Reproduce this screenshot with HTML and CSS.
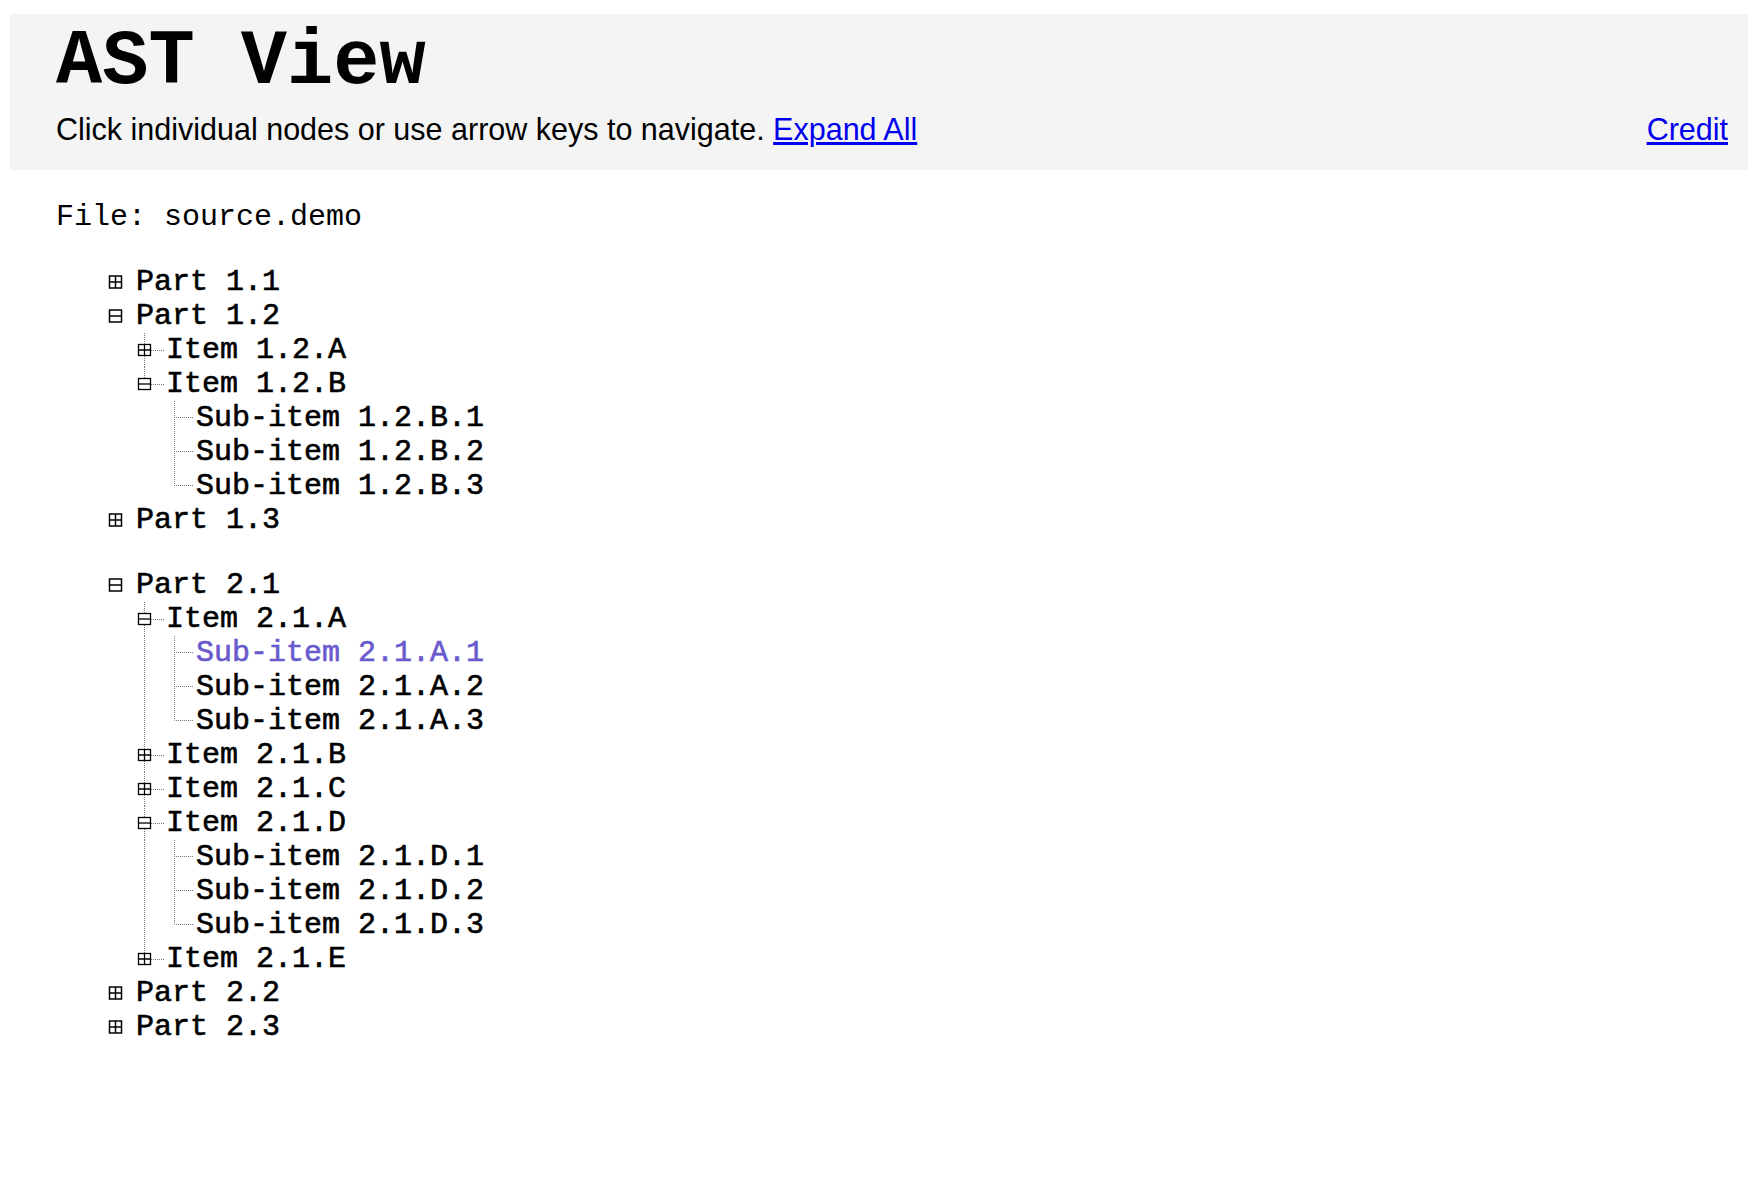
FILE: index.html
```html
<!DOCTYPE html>
<html lang="en">
<head>
<meta charset="utf-8">
<title>AST View</title>
<link rel="stylesheet" href="styles.css">
</head>
<body>
<svg class="defs" aria-hidden="true">
  <symbol id="part-plus" viewBox="0 0 30 34">
    <rect x="3.5" y="11" width="12" height="12" fill="#fff" stroke="#000" stroke-width="1.5"/>
    <path d="M3.5 17H15.5M9.5 11V23" stroke="#000" stroke-width="1.5"/>
  </symbol>
  <symbol id="part-minus" viewBox="0 0 30 34">
    <rect x="3.5" y="11" width="12" height="12" fill="#fff" stroke="#000" stroke-width="1.5"/>
    <path d="M3.5 17H15.5" stroke="#000" stroke-width="1.5"/>
  </symbol>
  <symbol id="plus-t" viewBox="0 0 30 34">
    <path d="M8.5 0V11M8.5 23V34M15 17.5H28" fill="none" stroke="#777" stroke-dasharray="1 1"/>
    <rect x="2.5" y="11.5" width="12" height="11" fill="#fff" stroke="#000" stroke-width="1.3"/>
    <path d="M2.5 17H14.5M8.5 11.5V22.5" stroke="#000" stroke-width="1.3"/>
  </symbol>
  <symbol id="plus-l" viewBox="0 0 30 34">
    <path d="M8.5 0V11M15 17.5H28" fill="none" stroke="#777" stroke-dasharray="1 1"/>
    <rect x="2.5" y="11.5" width="12" height="11" fill="#fff" stroke="#000" stroke-width="1.3"/>
    <path d="M2.5 17H14.5M8.5 11.5V22.5" stroke="#000" stroke-width="1.3"/>
  </symbol>
  <symbol id="minus-t" viewBox="0 0 30 34">
    <path d="M8.5 0V11M8.5 23V34M15 17.5H28" fill="none" stroke="#777" stroke-dasharray="1 1"/>
    <rect x="2.5" y="11.5" width="12" height="11" fill="#fff" stroke="#000" stroke-width="1.3"/>
    <path d="M2.5 17H14.5" stroke="#000" stroke-width="1.3"/>
  </symbol>
  <symbol id="minus-l" viewBox="0 0 30 34">
    <path d="M8.5 0V11M15 17.5H28" fill="none" stroke="#777" stroke-dasharray="1 1"/>
    <rect x="2.5" y="11.5" width="12" height="11" fill="#fff" stroke="#000" stroke-width="1.3"/>
    <path d="M2.5 17H14.5" stroke="#000" stroke-width="1.3"/>
  </symbol>
  <symbol id="line-i" viewBox="0 0 30 34">
    <path d="M8.5 0V34" fill="none" stroke="#777" stroke-dasharray="1 1"/>
  </symbol>
  <symbol id="line-t" viewBox="0 0 30 34">
    <path d="M8.5 0V34M10 16.5H28" fill="none" stroke="#777" stroke-dasharray="1 1"/>
  </symbol>
  <symbol id="line-l" viewBox="0 0 30 34">
    <path d="M8.5 0V16.5H28" fill="none" stroke="#777" stroke-dasharray="1 1"/>
  </symbol>
</svg>

<header class="header">
  <h1 class="title">AST View</h1>
  <div class="subline">
    <p class="intro">Click individual nodes or use arrow keys to navigate. <a href="#">Expand All</a></p>
    <a href="#">Credit</a>
  </div>
</header>

<main class="main">
  <div class="file">File: source.demo</div>

  <div class="tree">
    <div class="group">
      <div class="row"><svg class="cell"><use href="#part-plus"/></svg><span>Part 1.1</span></div>
      <div class="row"><svg class="cell"><use href="#part-minus"/></svg><span>Part 1.2</span></div>
      <div class="row"><span class="gap"></span><svg class="cell"><use href="#plus-t"/></svg><span>Item 1.2.A</span></div>
      <div class="row"><span class="gap"></span><svg class="cell"><use href="#minus-l"/></svg><span>Item 1.2.B</span></div>
      <div class="row"><span class="gap"></span><span class="gap"></span><svg class="cell"><use href="#line-t"/></svg><span>Sub-item 1.2.B.1</span></div>
      <div class="row"><span class="gap"></span><span class="gap"></span><svg class="cell"><use href="#line-t"/></svg><span>Sub-item 1.2.B.2</span></div>
      <div class="row"><span class="gap"></span><span class="gap"></span><svg class="cell"><use href="#line-l"/></svg><span>Sub-item 1.2.B.3</span></div>
      <div class="row"><svg class="cell"><use href="#part-plus"/></svg><span>Part 1.3</span></div>
    </div>

    <div class="group">
      <div class="row"><svg class="cell"><use href="#part-minus"/></svg><span>Part 2.1</span></div>
      <div class="row"><span class="gap"></span><svg class="cell"><use href="#minus-t"/></svg><span>Item 2.1.A</span></div>
      <div class="row"><span class="gap"></span><svg class="cell"><use href="#line-i"/></svg><svg class="cell"><use href="#line-t"/></svg><span class="selected">Sub-item 2.1.A.1</span></div>
      <div class="row"><span class="gap"></span><svg class="cell"><use href="#line-i"/></svg><svg class="cell"><use href="#line-t"/></svg><span>Sub-item 2.1.A.2</span></div>
      <div class="row"><span class="gap"></span><svg class="cell"><use href="#line-i"/></svg><svg class="cell"><use href="#line-l"/></svg><span>Sub-item 2.1.A.3</span></div>
      <div class="row"><span class="gap"></span><svg class="cell"><use href="#plus-t"/></svg><span>Item 2.1.B</span></div>
      <div class="row"><span class="gap"></span><svg class="cell"><use href="#plus-t"/></svg><span>Item 2.1.C</span></div>
      <div class="row"><span class="gap"></span><svg class="cell"><use href="#minus-t"/></svg><span>Item 2.1.D</span></div>
      <div class="row"><span class="gap"></span><svg class="cell"><use href="#line-i"/></svg><svg class="cell"><use href="#line-t"/></svg><span>Sub-item 2.1.D.1</span></div>
      <div class="row"><span class="gap"></span><svg class="cell"><use href="#line-i"/></svg><svg class="cell"><use href="#line-t"/></svg><span>Sub-item 2.1.D.2</span></div>
      <div class="row"><span class="gap"></span><svg class="cell"><use href="#line-i"/></svg><svg class="cell"><use href="#line-l"/></svg><span>Sub-item 2.1.D.3</span></div>
      <div class="row"><span class="gap"></span><svg class="cell"><use href="#plus-l"/></svg><span>Item 2.1.E</span></div>
      <div class="row"><svg class="cell"><use href="#part-plus"/></svg><span>Part 2.2</span></div>
      <div class="row"><svg class="cell"><use href="#part-plus"/></svg><span>Part 2.3</span></div>
    </div>
  </div>
</main>
</body>
</html>
```

FILE: styles.css
```css
html, body {
  margin: 0;
  padding: 0;
  background: #fff;
  color: #000;
}

.defs {
  display: block;
  width: 0;
  height: 0;
  overflow: hidden;
}

.header {
  margin: 14px 12px 0 10px;
  padding: 11px 20px 24px 46px;
  background: #f4f4f4;
}

.title {
  margin: 0;
  font-family: "Liberation Mono", "Courier New", monospace;
  font-weight: bold;
  font-size: 77px;
  line-height: 76px;
}

.subline {
  display: flex;
  justify-content: space-between;
  margin-top: 11px;
  font-family: "Liberation Sans", Arial, sans-serif;
  font-size: 30.5px;
  line-height: 34px;
}

.intro {
  margin: 0;
}

.subline a {
  color: #0000ee;
  text-decoration: underline;
}

.main {
  padding: 30px 0 0 56px;
}

.file {
  font-family: "Liberation Mono", "Courier New", monospace;
  font-size: 30px;
  line-height: 34px;
}

.tree {
  margin-top: 31px;
  padding-left: 50px;
  font-family: "Liberation Mono", "Courier New", monospace;
  font-size: 30px;
  line-height: 34px;
  -webkit-text-stroke: 0.6px currentColor;
}

.group + .group {
  margin-top: 31px;
}

.row {
  display: flex;
  align-items: flex-start;
  height: 34px;
  white-space: pre;
}

.cell {
  display: block;
  flex: 0 0 30px;
  width: 30px;
  height: 34px;
}

.gap {
  display: block;
  flex: 0 0 30px;
  width: 30px;
  height: 34px;
}

.selected {
  color: #6a5acd;
}
```
